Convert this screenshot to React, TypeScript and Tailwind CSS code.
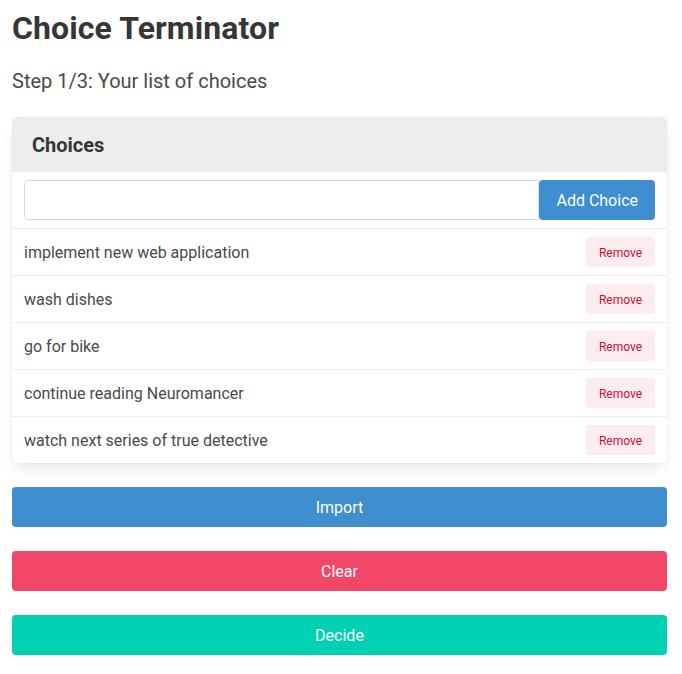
const choices = [
  "implement new web application",
  "wash dishes",
  "go for bike",
  "continue reading Neuromancer",
  "watch next series of true detective",
];

export default function App() {
  return (
    <div className="pl-3 pr-[15px] pt-[8px] pb-4 bg-white text-[#4a4a4a] font-['Roboto',sans-serif]">
      <h1 className="text-[32px] font-bold leading-[40px] text-[#363636] tracking-[0.1px]">Choice Terminator</h1>
      <p className="mt-[21px] text-[20px] leading-[24px] text-[#4a4a4a]">Step 1/3: Your list of choices</p>

      <div className="mt-[24px] rounded-md bg-white shadow-[0_8px_16px_-4px_rgba(10,10,10,0.1),0_0_0_1px_rgba(10,10,10,0.02)]">
        <div className="h-[55px] flex items-center px-5 bg-[#ededed] rounded-t-md">
          <span className="text-[20px] font-bold text-[#363636]">Choices</span>
        </div>
        <div className="flex px-3 py-2">
          <input className="flex-1 h-10 border border-[#dbdbdb] rounded-l bg-white outline-none px-3" />
          <button className="h-10 pt-px px-[17px] bg-[#3e8ed0] text-white text-[16px] rounded">Add Choice</button>
        </div>
        {choices.map((c) => (
          <div
            key={c}
            className="flex items-center justify-between h-[47px] px-3 border-t border-[#ededed]"
          >
            <span className="mt-[2px] text-[16px] text-[#4a4a4a]">{c}</span>
            <button className="w-[69px] h-[30px] pt-px bg-[#feecf0] text-[#cc0f35] text-[12px] rounded-[3px]">Remove</button>
          </div>
        ))}
      </div>

      <div className="mt-6 flex flex-col gap-6">
        <button className="h-10 w-full pt-px rounded bg-[#3e8ed0] text-white text-[16px]">Import</button>
        <button className="h-10 w-full pt-px rounded bg-[#f14668] text-white text-[16px]">Clear</button>
        <button className="h-10 w-full pt-px rounded bg-[#00d1b2] text-white text-[16px]">Decide</button>
      </div>
    </div>
  );
}
